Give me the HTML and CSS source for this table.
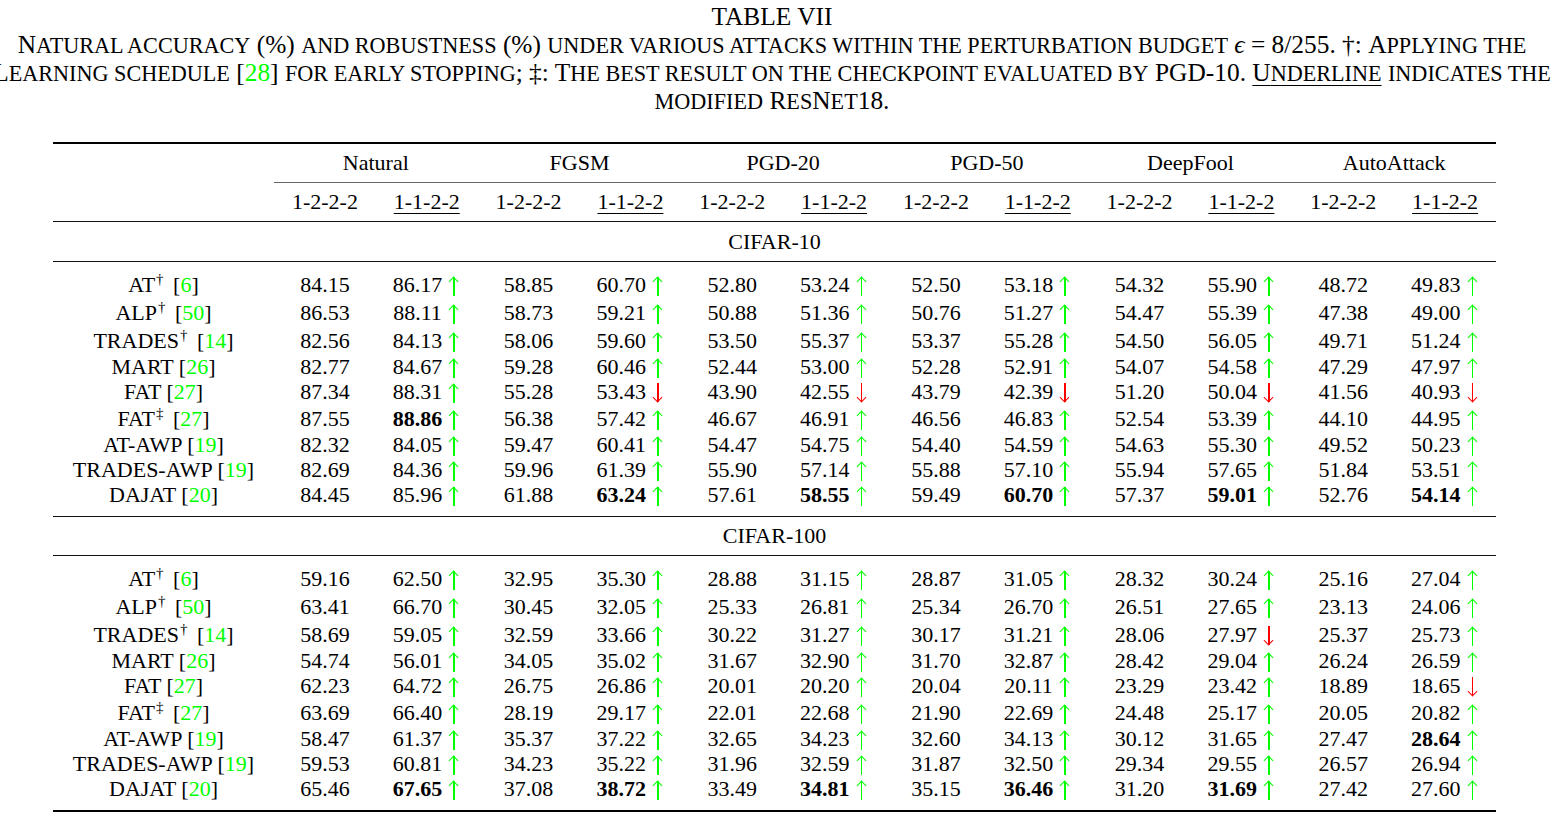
FILE: index.html
```html
<!DOCTYPE html>
<html>
<head>
<meta charset="utf-8">
<link rel="stylesheet" href="styles.css">
</head>
<body>
<div class="caption">
  <div class="cap-line"><span class="cap-text">TABLE VII</span></div>
  <div class="cap-line"><span class="cap-text">N<span class="s">atural accuracy</span> (%) <span class="s">and robustness</span> (%) <span class="s">under various attacks within the perturbation budget</span> <i>ϵ</i> = 8/255. †: A<span class="s">pplying the</span></span></div>
  <div class="cap-line"><span class="cap-text">L<span class="s">earning schedule</span> [<span class="c">28</span>] <span class="s">for early stopping</span>; ‡: T<span class="s">he best result on the checkpoint evaluated by</span> PGD-10. <span class="ul">U<span class="s">nderline</span></span> <span class="s">indicates the</span></span></div>
  <div class="cap-line"><span class="cap-text"><span class="s">modified</span> R<span class="s">es</span>N<span class="s">et</span>18.</span></div>
</div>

<div class="tbl">
  <div class="toprule"></div>
  <div class="row hdr">
    <div class="m"></div>
    <div class="grp">Natural</div><div class="grp">FGSM</div><div class="grp">PGD-20</div><div class="grp">PGD-50</div><div class="grp">DeepFool</div><div class="grp">AutoAttack</div>
  </div>
  <div class="cmid"></div>
  <div class="row hdr">
    <div class="m"></div>
    <div>1-2-2-2</div><div><span class="ul">1-1-2-2</span></div>
    <div>1-2-2-2</div><div><span class="ul">1-1-2-2</span></div>
    <div>1-2-2-2</div><div><span class="ul">1-1-2-2</span></div>
    <div>1-2-2-2</div><div><span class="ul">1-1-2-2</span></div>
    <div>1-2-2-2</div><div><span class="ul">1-1-2-2</span></div>
    <div>1-2-2-2</div><div><span class="ul">1-1-2-2</span></div>
  </div>
  <div class="midrule"></div>
  <div class="section">CIFAR-10</div>
  <div class="midrule"></div>
  <div class="body">
    <div class="row tall"><div class="m">AT<sup>†</sup> [<span class="c">6</span>]</div>
      <div>84.15</div><div>86.17 <span class="ar up"></span></div><div>58.85</div><div>60.70 <span class="ar up"></span></div><div>52.80</div><div>53.24 <span class="ar up"></span></div><div>52.50</div><div>53.18 <span class="ar up"></span></div><div>54.32</div><div>55.90 <span class="ar up"></span></div><div>48.72</div><div>49.83 <span class="ar up"></span></div></div>
    <div class="row tall"><div class="m">ALP<sup>†</sup> [<span class="c">50</span>]</div>
      <div>86.53</div><div>88.11 <span class="ar up"></span></div><div>58.73</div><div>59.21 <span class="ar up"></span></div><div>50.88</div><div>51.36 <span class="ar up"></span></div><div>50.76</div><div>51.27 <span class="ar up"></span></div><div>54.47</div><div>55.39 <span class="ar up"></span></div><div>47.38</div><div>49.00 <span class="ar up"></span></div></div>
    <div class="row tall"><div class="m">TRADES<sup>†</sup> [<span class="c">14</span>]</div>
      <div>82.56</div><div>84.13 <span class="ar up"></span></div><div>58.06</div><div>59.60 <span class="ar up"></span></div><div>53.50</div><div>55.37 <span class="ar up"></span></div><div>53.37</div><div>55.28 <span class="ar up"></span></div><div>54.50</div><div>56.05 <span class="ar up"></span></div><div>49.71</div><div>51.24 <span class="ar up"></span></div></div>
    <div class="row"><div class="m">MART [<span class="c">26</span>]</div>
      <div>82.77</div><div>84.67 <span class="ar up"></span></div><div>59.28</div><div>60.46 <span class="ar up"></span></div><div>52.44</div><div>53.00 <span class="ar up"></span></div><div>52.28</div><div>52.91 <span class="ar up"></span></div><div>54.07</div><div>54.58 <span class="ar up"></span></div><div>47.29</div><div>47.97 <span class="ar up"></span></div></div>
    <div class="row"><div class="m">FAT [<span class="c">27</span>]</div>
      <div>87.34</div><div>88.31 <span class="ar up"></span></div><div>55.28</div><div>53.43 <span class="ar dn"></span></div><div>43.90</div><div>42.55 <span class="ar dn"></span></div><div>43.79</div><div>42.39 <span class="ar dn"></span></div><div>51.20</div><div>50.04 <span class="ar dn"></span></div><div>41.56</div><div>40.93 <span class="ar dn"></span></div></div>
    <div class="row tall"><div class="m">FAT<sup>‡</sup> [<span class="c">27</span>]</div>
      <div>87.55</div><div><b>88.86</b> <span class="ar up"></span></div><div>56.38</div><div>57.42 <span class="ar up"></span></div><div>46.67</div><div>46.91 <span class="ar up"></span></div><div>46.56</div><div>46.83 <span class="ar up"></span></div><div>52.54</div><div>53.39 <span class="ar up"></span></div><div>44.10</div><div>44.95 <span class="ar up"></span></div></div>
    <div class="row"><div class="m">AT-AWP [<span class="c">19</span>]</div>
      <div>82.32</div><div>84.05 <span class="ar up"></span></div><div>59.47</div><div>60.41 <span class="ar up"></span></div><div>54.47</div><div>54.75 <span class="ar up"></span></div><div>54.40</div><div>54.59 <span class="ar up"></span></div><div>54.63</div><div>55.30 <span class="ar up"></span></div><div>49.52</div><div>50.23 <span class="ar up"></span></div></div>
    <div class="row"><div class="m">TRADES-AWP [<span class="c">19</span>]</div>
      <div>82.69</div><div>84.36 <span class="ar up"></span></div><div>59.96</div><div>61.39 <span class="ar up"></span></div><div>55.90</div><div>57.14 <span class="ar up"></span></div><div>55.88</div><div>57.10 <span class="ar up"></span></div><div>55.94</div><div>57.65 <span class="ar up"></span></div><div>51.84</div><div>53.51 <span class="ar up"></span></div></div>
    <div class="row"><div class="m">DAJAT [<span class="c">20</span>]</div>
      <div>84.45</div><div>85.96 <span class="ar up"></span></div><div>61.88</div><div><b>63.24</b> <span class="ar up"></span></div><div>57.61</div><div><b>58.55</b> <span class="ar up"></span></div><div>59.49</div><div><b>60.70</b> <span class="ar up"></span></div><div>57.37</div><div><b>59.01</b> <span class="ar up"></span></div><div>52.76</div><div><b>54.14</b> <span class="ar up"></span></div></div>
  </div>
  <div class="midrule"></div>
  <div class="section s2">CIFAR-100</div>
  <div class="midrule"></div>
  <div class="body">
    <div class="row tall"><div class="m">AT<sup>†</sup> [<span class="c">6</span>]</div>
      <div>59.16</div><div>62.50 <span class="ar up"></span></div><div>32.95</div><div>35.30 <span class="ar up"></span></div><div>28.88</div><div>31.15 <span class="ar up"></span></div><div>28.87</div><div>31.05 <span class="ar up"></span></div><div>28.32</div><div>30.24 <span class="ar up"></span></div><div>25.16</div><div>27.04 <span class="ar up"></span></div></div>
    <div class="row tall"><div class="m">ALP<sup>†</sup> [<span class="c">50</span>]</div>
      <div>63.41</div><div>66.70 <span class="ar up"></span></div><div>30.45</div><div>32.05 <span class="ar up"></span></div><div>25.33</div><div>26.81 <span class="ar up"></span></div><div>25.34</div><div>26.70 <span class="ar up"></span></div><div>26.51</div><div>27.65 <span class="ar up"></span></div><div>23.13</div><div>24.06 <span class="ar up"></span></div></div>
    <div class="row tall"><div class="m">TRADES<sup>†</sup> [<span class="c">14</span>]</div>
      <div>58.69</div><div>59.05 <span class="ar up"></span></div><div>32.59</div><div>33.66 <span class="ar up"></span></div><div>30.22</div><div>31.27 <span class="ar up"></span></div><div>30.17</div><div>31.21 <span class="ar up"></span></div><div>28.06</div><div>27.97 <span class="ar dn"></span></div><div>25.37</div><div>25.73 <span class="ar up"></span></div></div>
    <div class="row"><div class="m">MART [<span class="c">26</span>]</div>
      <div>54.74</div><div>56.01 <span class="ar up"></span></div><div>34.05</div><div>35.02 <span class="ar up"></span></div><div>31.67</div><div>32.90 <span class="ar up"></span></div><div>31.70</div><div>32.87 <span class="ar up"></span></div><div>28.42</div><div>29.04 <span class="ar up"></span></div><div>26.24</div><div>26.59 <span class="ar up"></span></div></div>
    <div class="row"><div class="m">FAT [<span class="c">27</span>]</div>
      <div>62.23</div><div>64.72 <span class="ar up"></span></div><div>26.75</div><div>26.86 <span class="ar up"></span></div><div>20.01</div><div>20.20 <span class="ar up"></span></div><div>20.04</div><div>20.11 <span class="ar up"></span></div><div>23.29</div><div>23.42 <span class="ar up"></span></div><div>18.89</div><div>18.65 <span class="ar dn"></span></div></div>
    <div class="row tall"><div class="m">FAT<sup>‡</sup> [<span class="c">27</span>]</div>
      <div>63.69</div><div>66.40 <span class="ar up"></span></div><div>28.19</div><div>29.17 <span class="ar up"></span></div><div>22.01</div><div>22.68 <span class="ar up"></span></div><div>21.90</div><div>22.69 <span class="ar up"></span></div><div>24.48</div><div>25.17 <span class="ar up"></span></div><div>20.05</div><div>20.82 <span class="ar up"></span></div></div>
    <div class="row"><div class="m">AT-AWP [<span class="c">19</span>]</div>
      <div>58.47</div><div>61.37 <span class="ar up"></span></div><div>35.37</div><div>37.22 <span class="ar up"></span></div><div>32.65</div><div>34.23 <span class="ar up"></span></div><div>32.60</div><div>34.13 <span class="ar up"></span></div><div>30.12</div><div>31.65 <span class="ar up"></span></div><div>27.47</div><div><b>28.64</b> <span class="ar up"></span></div></div>
    <div class="row"><div class="m">TRADES-AWP [<span class="c">19</span>]</div>
      <div>59.53</div><div>60.81 <span class="ar up"></span></div><div>34.23</div><div>35.22 <span class="ar up"></span></div><div>31.96</div><div>32.59 <span class="ar up"></span></div><div>31.87</div><div>32.50 <span class="ar up"></span></div><div>29.34</div><div>29.55 <span class="ar up"></span></div><div>26.57</div><div>26.94 <span class="ar up"></span></div></div>
    <div class="row"><div class="m">DAJAT [<span class="c">20</span>]</div>
      <div>65.46</div><div><b>67.65</b> <span class="ar up"></span></div><div>37.08</div><div><b>38.72</b> <span class="ar up"></span></div><div>33.49</div><div><b>34.81</b> <span class="ar up"></span></div><div>35.15</div><div><b>36.46</b> <span class="ar up"></span></div><div>31.20</div><div><b>31.69</b> <span class="ar up"></span></div><div>27.42</div><div>27.60 <span class="ar up"></span></div></div>
  </div>
  <div class="bottomrule"></div>
</div>
</body>
</html>
```

FILE: styles.css
```css
html, body {
  margin: 0;
  padding: 0;
  background: #fff;
}

body {
  font-family: "Liberation Serif", "Times New Roman", serif;
  color: #000;
  width: 1553px;
  height: 819px;
  overflow: hidden;
}

.caption {
  padding-top: 2px;
  padding-right: 9px;
}

.cap-line {
  display: flex;
  justify-content: center;
  height: 28px;
  line-height: 28px;
  font-size: 25.4px;
}

.cap-text {
  flex: none;
  white-space: nowrap;
}

.s {
  font-size: 0.874em;
  text-transform: uppercase;
}

.c {
  color: #00ff00;
}

.ul {
  text-decoration: underline;
  text-decoration-thickness: 1px;
  text-underline-offset: 4px;
}

.tbl {
  margin: 28px 0 0 53px;
  width: 1443px;
  font-size: 22px;
}

.toprule,
.bottomrule {
  height: 2px;
  background: #000;
}

.midrule {
  height: 1px;
  background: #111;
}

.cmid {
  margin-left: 221px;
  height: 1px;
  background: #666;
}

.row {
  display: grid;
  grid-template-columns: 221px repeat(12, 1fr);
  height: 25px;
  line-height: 25px;
  text-align: center;
  white-space: nowrap;
}

.row.tall {
  padding-top: 2px;
  padding-bottom: 1px;
}

.row.hdr {
  height: 38px;
  line-height: 38px;
}

.grp {
  grid-column: span 2;
}

.section {
  height: 39px;
  line-height: 39px;
  text-align: center;
}

.section.s2 {
  height: 38px;
  line-height: 38px;
}

.body {
  padding: 8px 0 9px;
}

sup {
  font-size: 15px;
  line-height: 0;
  vertical-align: 8px;
  margin-left: 1px;
  margin-right: 4px;
}

b {
  font-weight: bold;
}

.ar {
  display: inline-block;
  position: relative;
  width: 13px;
  height: 20px;
  vertical-align: -4px;
}

.ar::before {
  content: "";
  position: absolute;
  left: 5.6px;
  top: 1px;
  bottom: 0;
  width: 1.6px;
  background: currentColor;
}

.ar::after {
  content: "";
  position: absolute;
  left: 2.6px;
  top: 1.6px;
  width: 6px;
  height: 6px;
  border-left: 1.6px solid currentColor;
  border-top: 1.6px solid currentColor;
  transform: rotate(45deg);
}

.up {
  color: #00ff00;
}

.dn {
  color: #ff0000;
}

.dn::before {
  top: 0;
  bottom: 1px;
}

.dn::after {
  top: auto;
  bottom: 1.6px;
  transform: rotate(225deg);
}
```
